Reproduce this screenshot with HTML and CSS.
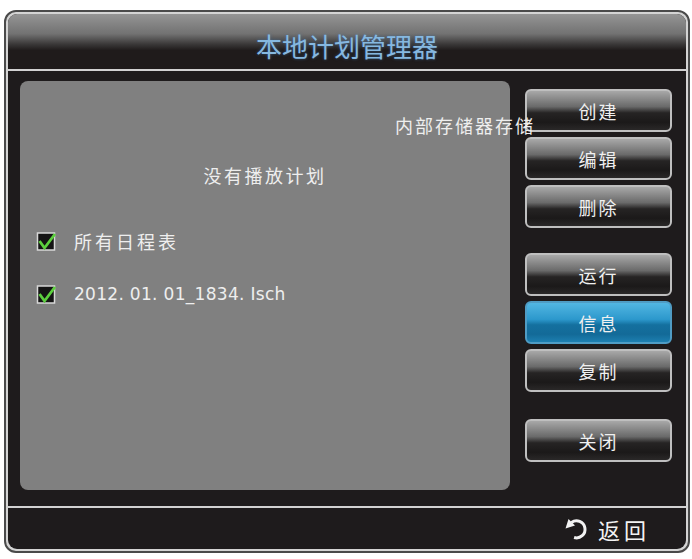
FILE: index.html
```html
<!DOCTYPE html>
<html lang="zh-CN">
<head>
  <meta charset="UTF-8" />
  <title>本地计划管理器</title>
  <link rel="stylesheet" href="styles.css">
</head>
<body>
  <div class="frame">
    <div class="inner">
      <div class="header">本地计划管理器</div>

      <div class="main">
        <div class="panel">
          <div class="storage">内部存储器存储</div>
          <div class="empty">没有播放计划</div>
          <div class="check-row">
            <svg class="check" width="22" height="22" viewBox="0 0 22 22">
              <rect x="1.5" y="3" width="17" height="17" fill="#141414" stroke="#d8d8d8" stroke-width="1.5"/>
              <path d="M3.5 11 L8.5 18 L19 4" fill="none" stroke="#5ccf3e" stroke-width="2.8"/>
            </svg>
            <span class="label">所有日程表</span>
          </div>
          <div class="check-row">
            <svg class="check" width="22" height="22" viewBox="0 0 22 22">
              <rect x="1.5" y="3" width="17" height="17" fill="#141414" stroke="#d8d8d8" stroke-width="1.5"/>
              <path d="M3.5 11 L8.5 18 L19 4" fill="none" stroke="#5ccf3e" stroke-width="2.8"/>
            </svg>
            <span class="label file">2012. 01. 01_1834. Isch</span>
          </div>
        </div>

        <div class="buttons">
          <button class="btn">创建</button>
          <button class="btn">编辑</button>
          <button class="btn">删除</button>
          <button class="btn group">运行</button>
          <button class="btn active">信息</button>
          <button class="btn">复制</button>
          <button class="btn group last">关闭</button>
        </div>
      </div>

      <div class="footer">
        <svg class="back-icon" width="28" height="24" viewBox="0 0 28 24">
          <path d="M10.5 5.5 A8.5 8.5 0 1 1 13.1 20.5" fill="none" stroke="#f2f2f2" stroke-width="3"/>
          <polygon points="4.5,11.5 14,8.5 7.5,2" fill="#f2f2f2"/>
        </svg>
        <span class="back">返回</span>
      </div>
    </div>
  </div>
</body>
</html>
```

FILE: styles.css
```css
body {
  margin: 0;
  background: #ffffff;
  font-family: "Noto Sans CJK SC", "Noto Sans", sans-serif;
}
.frame {
  width: 678px;
  height: 535px;
  margin: 10px 0 0 4px;
  border: 2px solid #4a4a4a;
  border-radius: 12px;
  background: #d4d4d4;
  padding: 2px;
}
.inner {
  height: 100%;
  border-radius: 9px;
  overflow: hidden;
  background: #1e1b1c;
  display: flex;
  flex-direction: column;
}
.header {
  height: 57px;
  box-sizing: border-box;
  padding-top: 4px;
  border-bottom: 2px solid #d2d2d2;
  background: linear-gradient(#959595 0%, #727272 36%, #3a3838 55%, #1f1b1b 66%, #1f1b1b 100%);
  color: #86b8e0;
  font-size: 26px;
  line-height: 55px;
  text-align: center;
  text-shadow: 0 0 3px rgba(60, 120, 180, 0.6);
}

/* main area */
.main {
  height: 425px;
  border-bottom: 2px solid #d2d2d2;
  display: flex;
  align-items: flex-start;
  padding: 10px 0 0 12px;
}
.panel {
  position: relative;
  width: 490px;
  height: 409px;
  background: #808080;
  border-radius: 8px;
  color: #eeeeee;
  font-size: 18px;
}
.storage {
  position: absolute;
  top: 31px;
  right: -25px;
  z-index: 2;
  letter-spacing: 2px;
  white-space: nowrap;
}
.empty {
  text-align: center;
  margin-top: 81px;
  margin-bottom: 40px;
  letter-spacing: 2.5px;
}
.check-row {
  display: flex;
  align-items: center;
  gap: 16px;
  padding-left: 16px;
  height: 26px;
  margin-bottom: 27px;
}
.label {
  letter-spacing: 3px;
}
.label.file {
  font-family: "DejaVu Sans", sans-serif;
  font-size: 17px;
  letter-spacing: 0.3px;
}

/* right column */
.buttons {
  display: flex;
  flex-direction: column;
  gap: 5px;
  margin: 8px 0 0 15px;
}
.btn {
  width: 147px;
  height: 43px;
  padding: 0;
  border: 2px solid #bfbfbf;
  border-radius: 6px;
  background: linear-gradient(#a8a8a8 0%, #6a6a6a 40%, #262424 56%, #1b1919 80%, #2a2828 100%);
  color: #f0f0f0;
  font-family: "Noto Sans CJK SC", sans-serif;
  font-size: 18px;
  letter-spacing: 2px;
}
.btn.group {
  margin-top: 20px;
}
.btn.last {
  margin-top: 22px;
}
.btn.active {
  border-color: #4f9cc4;
  background: linear-gradient(#52b6e2 0%, #2c98cc 42%, #14709f 56%, #136a98 80%, #1d7fb0 100%);
}

/* footer */
.footer {
  flex: 1;
  display: flex;
  align-items: center;
  justify-content: flex-end;
  gap: 9px;
  padding-right: 36px;
}
.back {
  color: #f2f2f2;
  font-size: 22px;
  letter-spacing: 4px;
}
```
